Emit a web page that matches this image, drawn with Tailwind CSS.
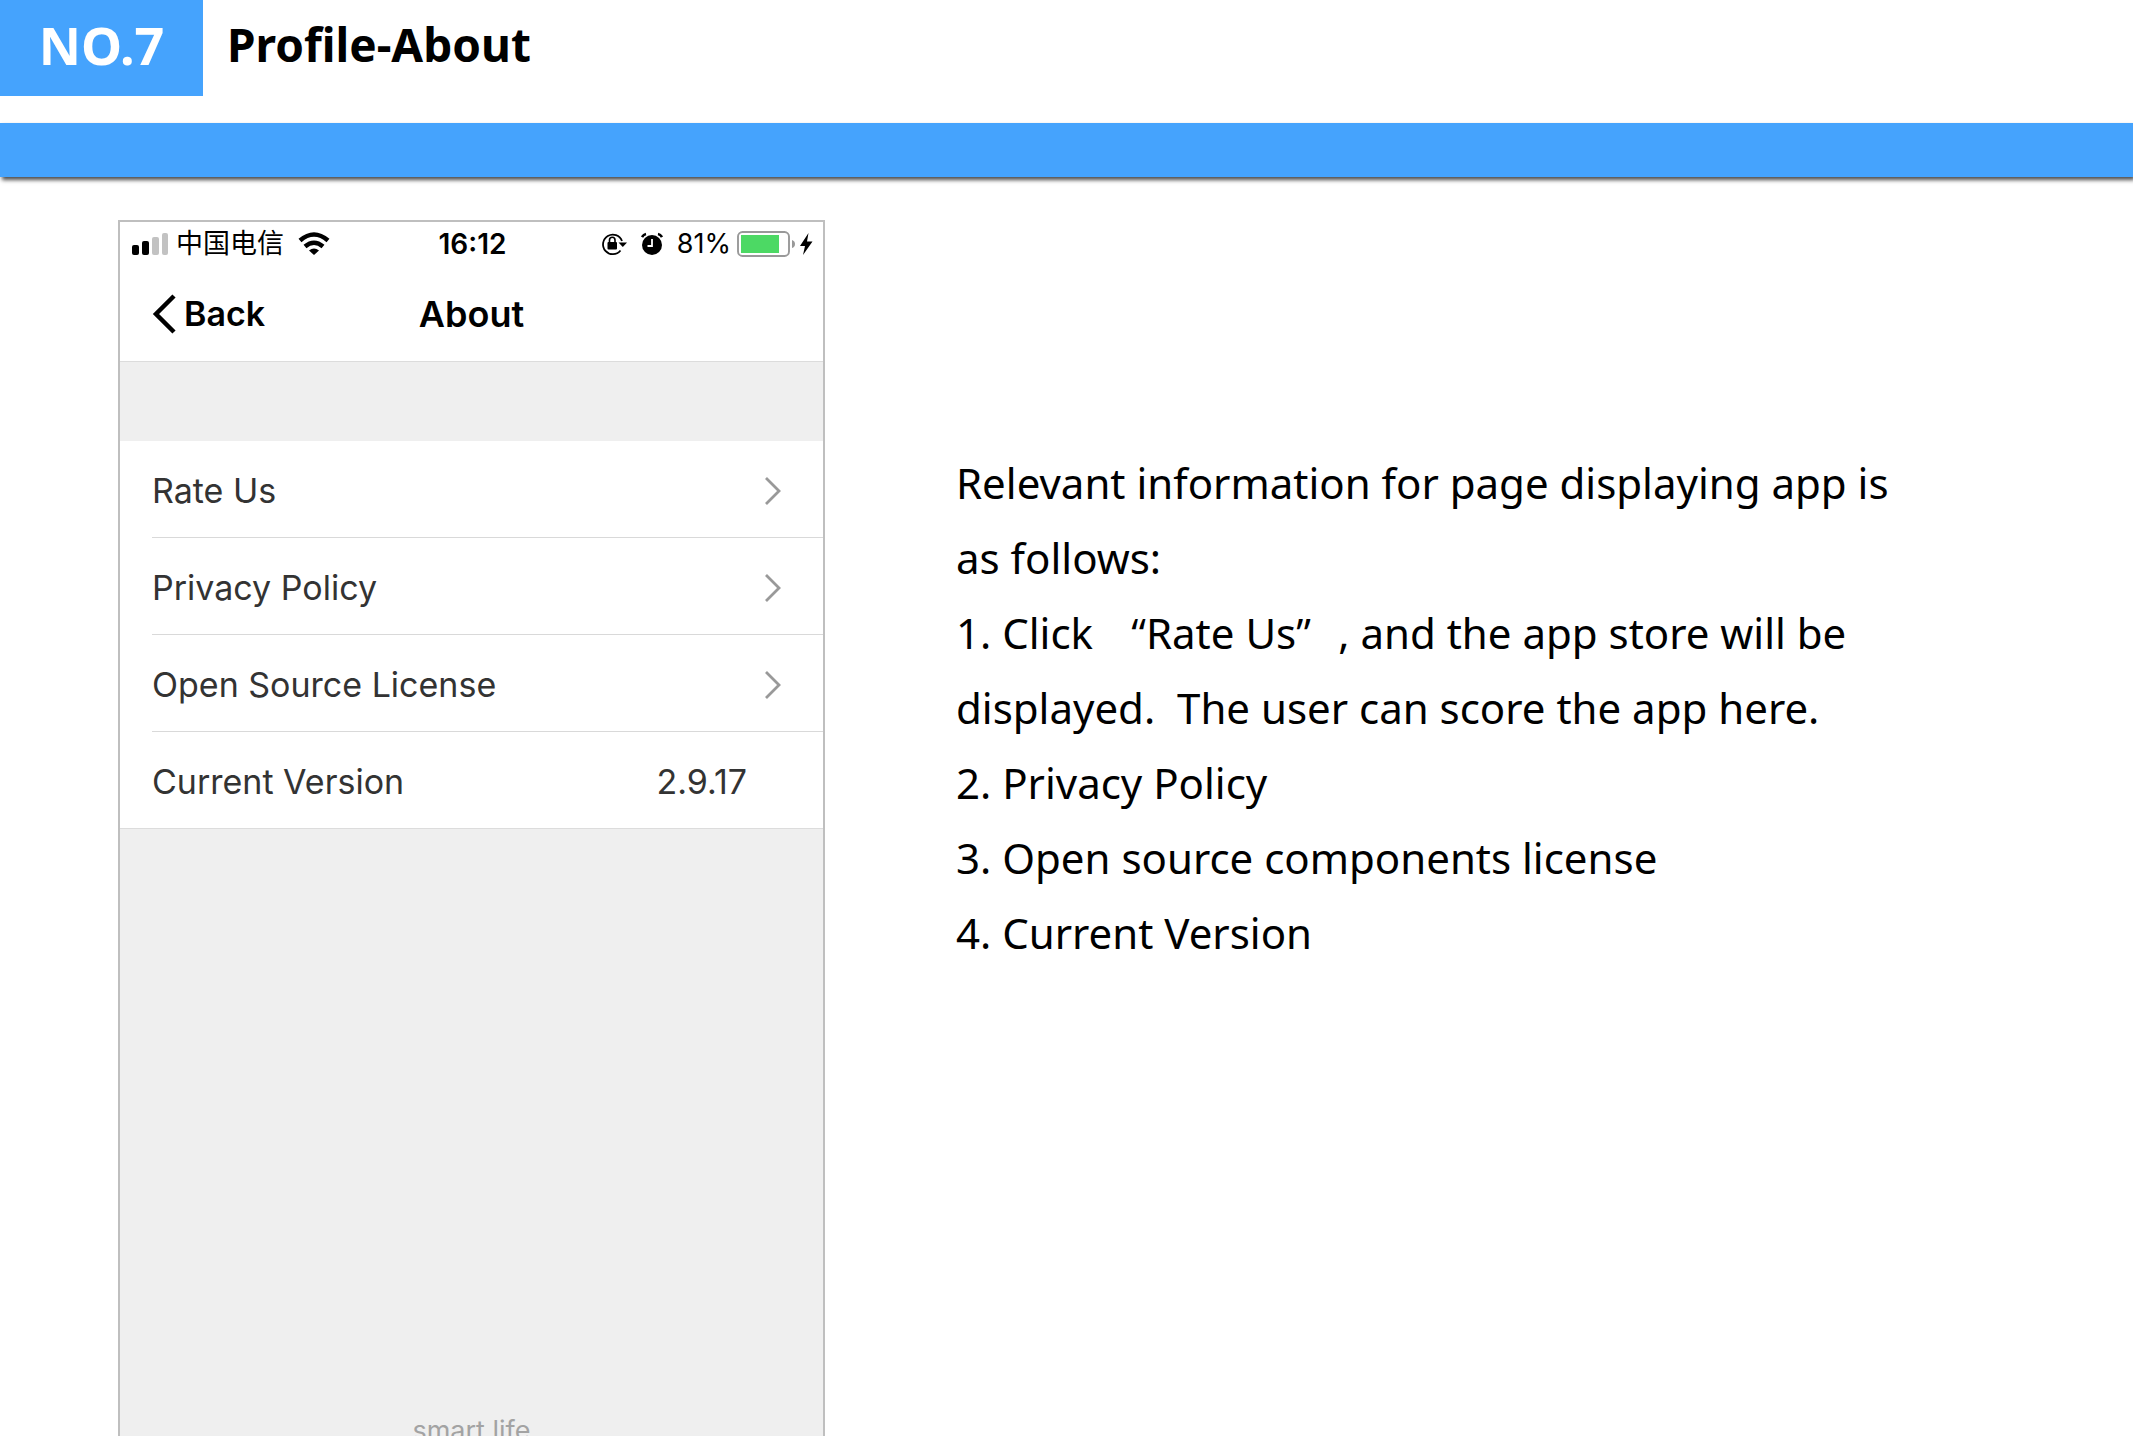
<!DOCTYPE html>
<html lang="en">
<head>
<meta charset="utf-8">
<meta name="viewport" content="width=device-width, initial-scale=1">
<title>Profile-About</title>
<script src="https://cdn.jsdelivr.net/npm/@tailwindcss/browser@4"></script>
</head>
<body class="h-screen overflow-hidden bg-white font-['Noto_Sans','Noto_Sans_CJK_SC',sans-serif] text-black">
  <header>
    <div class="flex h-[123px] items-start">
      <div class="flex h-24 w-[203px] justify-center bg-[#45a3fd] text-[52px] leading-[90px] font-bold text-white">NO.7</div>
      <h1 class="pl-6 text-[46px] leading-[88px] font-bold">Profile-About</h1>
    </div>
    <div class="h-[54px] bg-[#45a3fd] shadow-[2px_3px_4px_rgba(0,0,0,0.7)]"></div>
  </header>

  <main class="flex items-start pt-[43px] pl-[118px]">
    <section class="w-[707px] shrink-0 border-2 border-[#bfbfbf] bg-[#efefef] font-['Inter','Noto_Sans_CJK_SC',sans-serif]" aria-label="About screen">
      <div class="border-b border-[#dcdcdc] bg-white">
        <div class="grid h-11 grid-cols-3 items-center pr-2.5 pl-3 text-[27px] leading-8">
          <div class="flex items-center">
            <svg class="h-6 w-9" viewBox="0 0 36 24" aria-hidden="true">
              <rect x="0" y="13" width="7" height="10" rx="2"/><rect x="10" y="9" width="7" height="14" rx="2"/>
              <rect x="20" y="5" width="7" height="18" rx="2" fill="#c2c2c2"/><rect x="30" y="1" width="6" height="22" rx="2" fill="#c2c2c2"/>
            </svg>
            <span lang="zh-CN" class="ml-2 whitespace-nowrap">中国电信</span>
            <svg class="ml-3.5 h-6 w-8 shrink-0" viewBox="0 0 32 24" fill="none" stroke="#000" stroke-width="4.500" aria-hidden="true">
              <path d="M2 8.500Q16-3.500 30 8.500"/><path d="M7 14.500Q16 7 25 14.500"/>
              <path d="M16 23L11 18.500Q16 14.500 21 18.500Z" fill="#000" stroke="none"/>
            </svg>
          </div>
          <time class="text-center text-[28px] font-semibold">16:12</time>
          <div class="flex items-center justify-end">
            <svg class="h-6 w-[26px]" viewBox="0 0 26 24" aria-hidden="true">
              <path d="M19.500 18.500A9.800 9.800 0 1 1 21 9" fill="none" stroke="#000" stroke-width="1.800"/>
              <path d="M17.500 10.500H26l-4.200 4.500z"/><rect x="6.500" y="10" width="9.500" height="7.500" rx="1"/>
              <path d="M8.500 10.500V8a2.700 2.700 0 0 1 5.500 0v2.500" fill="none" stroke="#000" stroke-width="1.600"/>
            </svg>
            <svg class="ml-3.5 h-6 w-[22px]" viewBox="0 0 22 24" aria-hidden="true">
              <circle cx="11" cy="13" r="10"/><path d="M1 5Q2.500 2.500 5 2M21 5Q19.500 2.500 17 2" fill="none" stroke="#000" stroke-width="2.600"/>
              <path d="M11 7v7H6.500" fill="none" stroke="#fff" stroke-width="1.800"/>
            </svg>
            <span class="ml-3.5">81%</span>
            <svg class="ml-1.5 h-[26px] w-[60px]" viewBox="0 0 60 26" aria-hidden="true">
              <rect x="1" y="1" width="51" height="24" rx="4.500" fill="#fff" stroke="#999" stroke-width="1.900"/>
              <rect x="4" y="4" width="38" height="18" fill="#4cd964"/><path d="M55 9q3 1 3 4t-3 4z" fill="#999"/>
            </svg>
            <svg class="ml-0.5 h-6 w-3.5" viewBox="0 0 14 24" aria-hidden="true"><path d="M9.500 1L1 14h5L4 23 13.500 9.500H8z"/></svg>
          </div>
        </div>
        <div class="grid h-[95px] grid-cols-3 items-center px-8 text-[34px] leading-10 font-semibold">
          <button type="button" class="flex items-center gap-2 text-left">
            <svg class="h-10 w-6" viewBox="0 0 24 40" fill="none" stroke="#000" stroke-width="4.500" aria-hidden="true"><path d="M22 2L4 20L22 38"/></svg>
            Back
          </button>
          <h2 class="text-center text-[36px]">About</h2>
        </div>
      </div>
      <ul class="mt-[79px] border-b border-[#dcdcdc] bg-white pl-8 text-[34px] leading-10 text-[#333]">
        <li class="border-b border-[#d9d9d9]"><a href="#rate" class="flex h-24 items-center justify-between pt-1 pr-[42px]">Rate Us
          <svg class="h-7 w-4" viewBox="0 0 16 28" fill="none" stroke="#999" stroke-width="2.800" aria-hidden="true"><path d="M1 1L14 14L1 27"/></svg></a></li>
        <li class="border-b border-[#d9d9d9]"><a href="#privacy" class="flex h-24 items-center justify-between pt-1 pr-[42px]">Privacy Policy
          <svg class="h-7 w-4" viewBox="0 0 16 28" fill="none" stroke="#999" stroke-width="2.800" aria-hidden="true"><path d="M1 1L14 14L1 27"/></svg></a></li>
        <li class="border-b border-[#d9d9d9]"><a href="#license" class="flex h-24 items-center justify-between pt-1 pr-[42px]">Open Source License
          <svg class="h-7 w-4" viewBox="0 0 16 28" fill="none" stroke="#999" stroke-width="2.800" aria-hidden="true"><path d="M1 1L14 14L1 27"/></svg></a></li>
        <li class="flex h-24 items-center justify-between pt-1 pr-[76px]"><span>Current Version</span><span>2.9.17</span></li>
      </ul>
      <p class="pt-[586px] pb-12 text-center text-[27px] leading-8 text-[#a3a3a3]">smart life</p>
    </section>

    <article class="ml-[131px] max-w-[980px] pt-[225px] text-[42px] leading-[75px]">
      <p>Relevant information for page displaying app is<br>as follows:</p>
      <p>1. Click <span class="inline-block w-[1em] text-right font-['Open_Sans',sans-serif] leading-none">“</span>Rate Us<span class="inline-block w-[1em] font-['Open_Sans',sans-serif] leading-none">”</span>, and the app store will be<br>displayed.&nbsp; The user can score the app here.</p>
      <p>2. Privacy Policy</p>
      <p>3. Open source components license</p>
      <p>4. Current Version</p>
    </article>
  </main>
</body>
</html>
